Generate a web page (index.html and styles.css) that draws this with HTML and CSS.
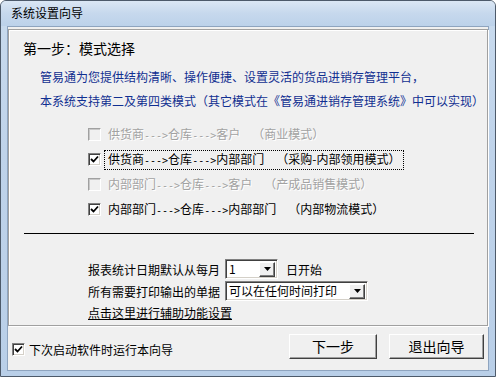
FILE: index.html
```html
<!DOCTYPE html>
<html lang="zh-CN">
<head>
<meta charset="utf-8">
<title>系统设置向导</title>
<link rel="stylesheet" href="styles.css">
</head>
<body>
<div class="window">
  <div class="titlebar">系统设置向导</div>
  <div class="client">
    <div class="panel">
      <h1 class="heading">第一步：模式选择</h1>
      <div class="intro">
        <p>管易通为您提供结构清晰、操作便捷、设置灵活的货品进销存管理平台，</p>
        <p>本系统支持第二及第四类模式（其它模式在《管易通进销存管理系统》中可以实现）</p>
      </div>
      <div class="modes">
        <div class="mode disabled">
          <span class="cb"></span>
          <span class="label">供货商<span class="ar">---&gt;</span>仓库<span class="ar">---&gt;</span>客户<span class="sp1"></span>（商业模式）</span>
        </div>
        <div class="mode">
          <span class="cb checked"><svg viewBox="0 0 9 9" width="9" height="9"><path d="M1 4 L3.5 6.5 L8 1.5" fill="none" stroke="#000" stroke-width="1.8"/></svg></span>
          <span class="label focus">供货商<span class="ar">---&gt;</span>仓库<span class="ar">---&gt;</span>内部部门<span class="sp2"></span>（采购-内部领用模式）</span>
        </div>
        <div class="mode disabled">
          <span class="cb"></span>
          <span class="label">内部部门<span class="ar">---&gt;</span>仓库<span class="ar">---&gt;</span>客户<span class="sp1"></span>（产成品销售模式）</span>
        </div>
        <div class="mode">
          <span class="cb checked"><svg viewBox="0 0 9 9" width="9" height="9"><path d="M1 4 L3.5 6.5 L8 1.5" fill="none" stroke="#000" stroke-width="1.8"/></svg></span>
          <span class="label">内部部门<span class="ar">---&gt;</span>仓库<span class="ar">---&gt;</span>内部部门<span class="sp2"></span>（内部物流模式）</span>
        </div>
      </div>
      <div class="rule"></div>
      <div class="form">
        <div class="frow">
          <span class="flabel">报表统计日期默认从每月</span>
          <span class="combo small"><span class="val">1</span><span class="drop"><svg viewBox="0 0 7 4" width="7" height="4"><path d="M0 0 H7 L3.5 4 Z" fill="#000"/></svg></span></span>
          <span class="after">日开始</span>
        </div>
        <div class="frow">
          <span class="flabel">所有需要打印输出的单据</span>
          <span class="combo wide"><span class="val">可以在任何时间打印</span><span class="drop"><svg viewBox="0 0 7 4" width="7" height="4"><path d="M0 0 H7 L3.5 4 Z" fill="#000"/></svg></span></span>
        </div>
        <div class="frow link-row">
          <a class="link" href="#">点击这里进行辅助功能设置</a>
        </div>
      </div>
    </div>
    <div class="footer">
      <div class="startup">
        <span class="cb checked"><svg viewBox="0 0 9 9" width="9" height="9"><path d="M1 4 L3.5 6.5 L8 1.5" fill="none" stroke="#000" stroke-width="1.8"/></svg></span>
        <span>下次启动软件时运行本向导</span>
      </div>
      <div class="buttons">
        <button class="btn next">下一步</button>
        <button class="btn quit">退出向导</button>
      </div>
    </div>
  </div>
</div>
</body>
</html>
```

FILE: styles.css
```css
* { box-sizing: border-box; }
html, body { margin: 0; padding: 0; }
body {
  width: 496px;
  height: 377px;
  overflow: hidden;
  background: #ffffff;
  font-family: "Noto Sans CJK SC", "Noto Sans", sans-serif;
  font-size: 12px;
  color: #000;
}
.window {
  width: 496px;
  height: 377px;
  background: linear-gradient(to bottom, #c9dbee 0%, #bfd3ea 40%, #b9cfe8 100%);
  border: 1px solid #4d5a6a;
  border-radius: 6px 6px 0 0;
  display: flex;
  flex-direction: column;
}
.titlebar {
  height: 25px;
  line-height: 24px;
  padding-left: 10px;
  font-size: 12px;
  color: #000;
  background: linear-gradient(to bottom, #dbe7f4 0%, #c6d8ed 50%, #bcd2ea 100%);
  border-radius: 5px 5px 0 0;
}
.client {
  flex: 1;
  margin: 0 6px 5px 6px;
  background: #f0f0f0;
  border: 1px solid #8ea4bf;
  display: flex;
  flex-direction: column;
  padding: 2px 0 0 0;
}
.panel {
  height: 297px;
  border: 1px solid #a0a0a0;
  box-shadow: inset 1px 1px 0 #ffffff, 1px 1px 0 #ffffff;
  padding: 8px 0 0 0;
  display: flex;
  flex-direction: column;
}
.heading {
  margin: 0;
  font-size: 14px;
  font-weight: normal;
  line-height: 20px;
  height: 20px;
  padding-left: 14px;
}
.intro {
  margin-top: 7px;
  padding-left: 31px;
  color: #102f91;
}
.intro p {
  margin: 0;
  line-height: 24px;
  height: 24px;
  white-space: nowrap;
}
.modes {
  margin-top: 9px;
  padding-left: 79px;
  display: flex;
  flex-direction: column;
}
.mode {
  height: 25px;
  display: flex;
  align-items: center;
  white-space: nowrap;
}
.mode .label { margin-left: 6px; padding: 0 1px; line-height: 16px; }
.mode.disabled .label { color: #a2a2a2; text-shadow: 1px 1px 0 #ffffff; }
.label.focus { outline: 1px dotted #000; outline-offset: 0; margin-left: 4px; padding: 0 3px; }
.ar {
  font-family: "DejaVu Sans Mono", "Liberation Mono", monospace;
  font-size: 10px;
}
.sp1 { display: inline-block; width: 12px; }
.sp2 { display: inline-block; width: 12px; }
.cb {
  width: 13px;
  height: 13px;
  flex: none;
  display: inline-flex;
  align-items: center;
  justify-content: center;
  background: #ffffff;
  border: 1px solid;
  border-color: #808080 #ffffff #ffffff #808080;
  box-shadow: inset 1px 1px 0 #404040, inset -1px -1px 0 #d4d0c8;
}
.mode.disabled .cb {
  background: #f0f0f0;
  border-color: #a0a0a0 #ffffff #ffffff #a0a0a0;
  box-shadow: inset 1px 1px 0 #c8c8c8;
}
.rule {
  margin: 11px 13px 0 15px;
  height: 1px;
  background: #000;
}
.form {
  margin-top: 24px;
  padding-left: 79px;
  display: flex;
  flex-direction: column;
}
.frow {
  height: 22px;
  display: flex;
  align-items: center;
  white-space: nowrap;
}
.flabel { width: 137px; }
.combo {
  height: 20px;
  display: flex;
  align-items: center;
  background: #ffffff;
  border: 1px solid;
  border-color: #808080 #ffffff #ffffff #808080;
  box-shadow: inset 1px 1px 0 #404040, inset -1px -1px 0 #d4d0c8;
  padding: 1px 2px 1px 3px;
}
.combo.small { width: 53px; }
.combo.wide { width: 143px; }
.combo .val { flex: 1; line-height: 16px; white-space: nowrap; }
.drop {
  width: 16px;
  height: 15px;
  flex: none;
  background: #f0f0f0;
  display: flex;
  align-items: center;
  justify-content: center;
  border: 1px solid;
  border-color: #ffffff #404040 #404040 #ffffff;
  box-shadow: inset -1px -1px 0 #808080;
}
.after { margin-left: 8px; }
.link-row { height: 20px; }
.link { color: #000; text-decoration: underline; }
.footer {
  flex: 1;
  display: flex;
  align-items: center;
  justify-content: space-between;
  padding: 0 4px 4px 4px;
}
.startup {
  display: flex;
  align-items: center;
  gap: 4px;
  margin-top: 6px;
}
.buttons {
  display: flex;
  gap: 12px;
}
.btn {
  height: 25px;
  width: 88px;
  font-family: "Noto Sans CJK SC", sans-serif;
  font-size: 14px;
  line-height: 20px;
  padding: 0;
  background: #f0f0f0;
  border: 1px solid;
  border-color: #ffffff #404040 #404040 #ffffff;
  box-shadow: inset -1px -1px 0 #a0a0a0;
  color: #000;
}
.btn.quit { width: 95px; }
```
